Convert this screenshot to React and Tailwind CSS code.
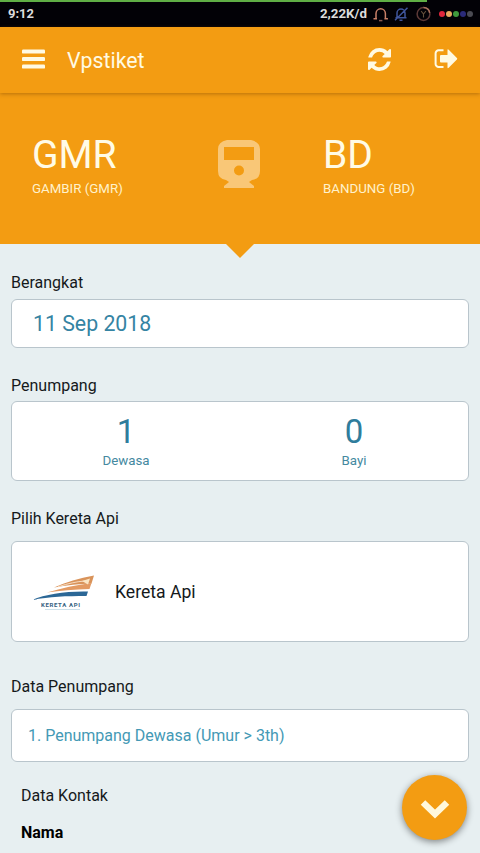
import { clsx } from 'clsx';

const dots = ['bg-[#e0263c]', 'bg-[#e8a860]', 'bg-[#3f9a3c]', 'bg-[#2a2a78]', 'bg-[#4a4a52]'];

const passengers = [
    { count: 1, label: 'Dewasa' },
    { count: 0, label: 'Bayi' },
];

function StatusIcons() {
    return (
        <svg className="ml-[6px] shrink-0" width="59" height="16" viewBox="0 0 59 16" fill="none" strokeWidth="1.5">
            {/* Bell */}
            <path d="M3 12V7.500a4.700 4.700 0 0 1 9.400 0V12M.5 12.700H4M11.400 12.700h3.500" stroke="#c98068" />
            <path d="M6 14.600h3.400" stroke="#8a5a50" />
            {/* Muted bell */}
            <path d="M24 11.500V7a4 4 0 0 1 8 0v4.500M22.500 11.800h11M22 14.300 34.500 1.800M26.500 14.200h3" stroke="#3f559c" />
            {/* Clock */}
            <circle cx="50.500" cy="8" r="6.400" stroke="#5c3937" />
            <path d="M50.500 1.600a6.400 6.400 0 0 1 6.200 5.200" stroke="#a9705c" />
            <path d="m48.100 5 2.400 3 2.400-3M50.500 8v3.500" stroke="#64503c" strokeWidth="1.100" />
        </svg>
    );
}

function StatusBar() {
    return (
        <div className="h-[27px] bg-[#020106] text-[#dcdcdc]">
            <div className="h-[2px] w-[427px] bg-[#5fae45]" />
            <div className="flex h-[23px] items-center pr-[7px] pl-[8px]">
                <span className="text-[13px] leading-4 font-bold">9:12</span>
                <span className="ml-auto text-[13.300px] leading-4 font-bold">2,22K/d</span>
                <StatusIcons />
                <div className="ml-[7px] flex gap-[1px]">
                    {dots.map((color) => (
                        <span key={color} className={clsx('h-[6px] w-[6px] rounded-full', color)} />
                    ))}
                </div>
            </div>
        </div>
    );
}

function Toolbar() {
    return (
        <header className="relative z-10 flex h-[66px] items-center bg-[#f39c12] pr-[22px] pl-[22px] text-[#fffae3] shadow-[0_1px_4px_rgba(110,60,0,0.45)]">
            <svg className="-mt-[2px]" width="23" height="20" viewBox="0 0 23 20" fill="currentColor">
                <rect width="23" height="4.200" rx="1.200" y="0.400" />
                <rect width="23" height="4.200" rx="1.200" y="7.900" />
                <rect width="23" height="4.200" rx="1.200" y="15.400" />
            </svg>
            <h1 className="mt-[2px] ml-[22px] text-[21.300px] leading-6">Vpstiket</h1>
            {/* Refresh */}
            <svg className="-mt-[2px] ml-auto" width="23" height="23" viewBox="0 0 1536 1536" fill="currentColor">
                <path d="M1511 928q0 5-1 7-64 268-268 434.500T764 1536q-146 0-282.500-55T238 1324l-129 129q-19 19-45 19t-45-19-19-45V960q0-26 19-45t45-19h448q26 0 45 19t19 45-19 45l-137 137q71 66 161 102t187 36q134 0 250-65t186-179q11-17 53-117 8-23 30-23h192q13 0 22.500 9.500t9.500 22.500zm25-800v448q0 26-19 45t-45 19h-448q-26 0-45-19t-19-45 19-45l138-138Q969 256 768 256q-134 0-250 65T332 500q-11 17-53 117-8 23-30 23H50q-13 0-22.500-9.500T18 608v-7q65-268 270-434.500T768 0q146 0 284 55.500T1297 212l130-129q19-19 45-19t45 19 19 45z" />
            </svg>
            {/* Logout */}
            <svg className="-mt-[2px] ml-[43px]" width="24" height="22" viewBox="0 0 24 22" fill="currentColor">
                <path d="M9.500 2.300H4.600A3 3 0 0 0 1.600 5.300v10.600a3 3 0 0 0 3 3h4.900" fill="none" stroke="currentColor" strokeWidth="2" />
                <path d="M7 7h6.500V2.200q0-1.600 1.200-.5l8.200 8.200q.8.800 0 1.600l-8.200 8.200q-1.200 1.100-1.200-.5V14.500H7q-1 0-1-1V8q0-1 1-1z" />
            </svg>
        </header>
    );
}

function Station({ code, name, className }) {
    return (
        <div className={clsx('text-[#fffbe6]', className)}>
            <div className="text-[39px] leading-[46px]">{code}</div>
            <div className="mt-[3px] text-[13.300px] leading-4 whitespace-nowrap text-[#fff2cc]">{name}</div>
        </div>
    );
}

function Route() {
    return (
        <section className="relative flex h-[151px] bg-[#f39c12] pt-[39px]">
            <Station code="GMR" name="GAMBIR (GMR)" className="w-[186px] pl-[32px]" />
            <svg className="mt-[8px] ml-[32px]" width="42" height="49" viewBox="0 0 42 49" fill="#f9c777">
                <path fillRule="evenodd" d="M9 0h24q9 2 9 9v22q0 8-8 9l-3 2 5 4v2H6v-2l5-4-3-2q-8-1-8-9V9q0-7 9-9zM6 7v13h30V7zM21 25.500a5 5 0 1 0 0 10 5 5 0 0 0 0-10z" />
            </svg>
            <Station code="BD" name="BANDUNG (BD)" className="ml-[63px]" />
            <svg className="absolute top-[150px] left-[225px]" width="30" height="15" viewBox="0 0 30 15">
                <path d="M0 0h30L15 15z" fill="#f39c12" />
            </svg>
        </section>
    );
}

function Card({ className, children }) {
    return (
        <div className={clsx('rounded-[6px] border border-[#b9c5cc] bg-white', className)}>
            {children}
        </div>
    );
}

function TrainLogo() {
    return (
        <svg className="mt-[4px]" width="64" height="38" viewBox="0 0 64 38">
            <path d="M22 12.500C34 7 47 3 62 .5l-2.500 8C48 9 34 10 22 12.500z" fill="#d9935a" />
            <path d="M15 17.500C30 13 44 10 59.500 8l-2 6C42 14.500 28 15.500 15 17.500z" fill="#e39a62" />
            <path d="M26 11.800C36 8.500 45 6.500 53 6" stroke="#fbe3cc" strokeWidth="0.900" fill="none" />
            <path d="m50 6 8-2.500-2 6z" fill="#fbe6c4" />
            <path d="M0 25C14 19 34 16 56 16.500L54.500 21C34 21 18 21.500 0 25z" fill="#2b6796" />
            <text x="9" y="32" fontSize="6" fontWeight="700" textLength="39" fill="#35627f">KERETA API</text>
            <path d="M13 34.500h35" stroke="#c2dbe6" strokeWidth="0.800" />
        </svg>
    );
}

export default function App() {
    return (
        <div className="relative h-[853px] w-[480px] overflow-hidden bg-[#e7eff1] font-['Roboto',sans-serif] text-[#15191b]">
            <StatusBar />
            <Toolbar />
            <Route />

            <main className="px-[11px] pt-[27px] text-[16px] leading-6">
                <h2>Berangkat</h2>
                <Card className="mt-[4px] flex h-[49px] items-center pl-[21px] text-[21.300px] text-[#3584a3]">
                    11 Sep 2018
                </Card>

                <h2 className="mt-[26px]">Penumpang</h2>
                <Card className="mt-[3px] grid h-[80px] grid-cols-2 pt-[11px] text-center">
                    {passengers.map((p) => (
                        <div key={p.label}>
                            <div className="text-[33px] leading-[38px] text-[#2f7d9c]">{p.count}</div>
                            <div className="mt-[2px] text-[13.300px] leading-4 text-[#4489a0]">{p.label}</div>
                        </div>
                    ))}
                </Card>

                <h2 className="mt-[26px]">Pilih Kereta Api</h2>
                <Card className="mt-[10px] flex h-[101px] items-center pl-[20px]">
                    <TrainLogo />
                    <span className="ml-[19px] text-[17.600px]">Kereta Api</span>
                </Card>

                <h2 className="mt-[33px]">Data Penumpang</h2>
                <Card className="mt-[10px] flex h-[53px] items-center pl-[16px] text-[#4499b5]">
                    1. Penumpang Dewasa (Umur &gt; 3th)
                </Card>

                <div className="mt-[22px] pl-[10px]">
                    <h2>Data Kontak</h2>
                    <label className="mt-[13px] block font-bold text-black">Nama</label>
                </div>
            </main>

            {/* Scroll down button */}
            <button className="absolute top-[775px] left-[402px] flex h-[65px] w-[65px] items-center justify-center rounded-full bg-[#f39c12] shadow-[0_2px_7px_rgba(0,0,0,0.45)]">
                <svg className="mt-[3px]" width="30" height="21" viewBox="0 0 30 21" fill="none">
                    <path d="M3 3.500 15 15 27 3.500" stroke="#fff8dc" strokeWidth="6.500" />
                </svg>
            </button>
        </div>
    );
}
